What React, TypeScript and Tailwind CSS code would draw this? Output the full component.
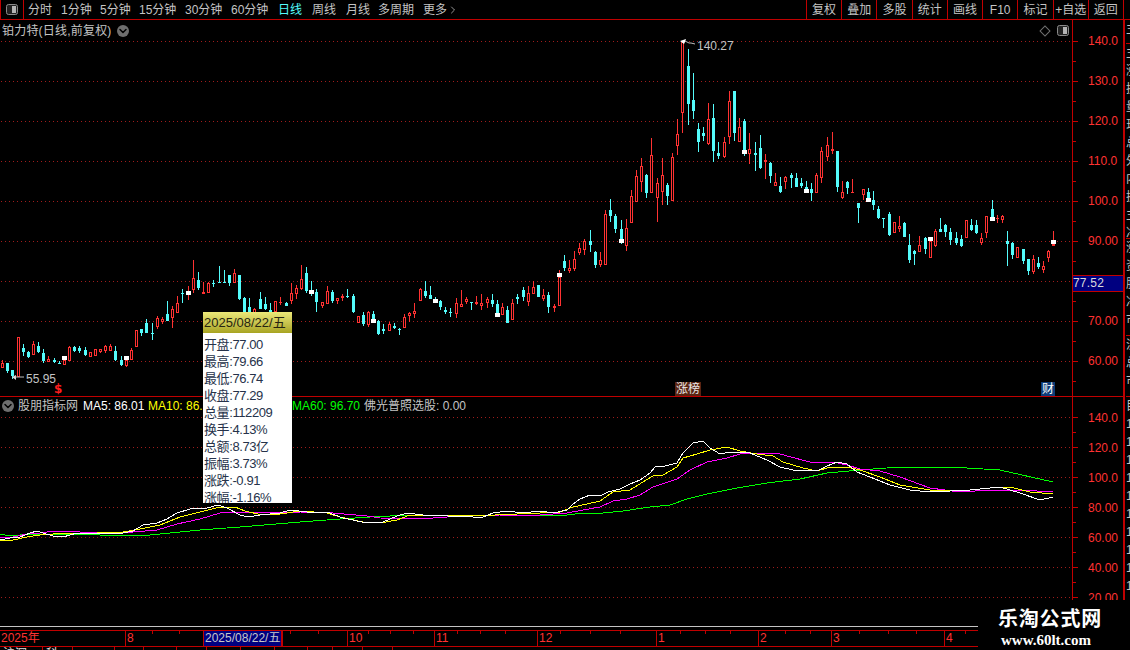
import { ChevronDown, ChevronRight } from "lucide-react";

type Kind = "r" | "c";
type Reading = [number, number, number, number, number, Kind, number?];

const RED = "#ff3232";
const CYAN = "#54fcfc";

// candle readings: x, high, body top, body bottom, low (measured at 3x), optional white block top
const CANDLE_GROUPS: { ox: number; oy: number; rows: Reading[] }[] = [
  {
    ox: 0,
    oy: 250,
    rows: [
      [7, 330, 340, 353, 355, "r"], [22, 340, 340, 362, 368, "c"], [37, 360, 360, 378, 388, "c"], [55, 262, 262, 382, 382, "r"],
      [70, 282, 293, 306, 318, "c"], [85, 303, 305, 320, 325, "c"], [100, 272, 282, 314, 316, "r"], [115, 276, 288, 305, 308, "c"],
      [130, 296, 310, 332, 338, "c"], [145, 318, 326, 335, 335, "r"], [163, 325, 330, 335, 338, "c"], [178, 333, 338, 343, 343, "c"],
      [193, 318, 330, 346, 346, "r", 318], [208, 288, 290, 332, 334, "r"], [223, 288, 290, 303, 305, "c"], [238, 288, 293, 303, 308, "c"],
      [256, 292, 300, 315, 318, "c"], [270, 306, 306, 322, 322, "r"], [286, 298, 298, 317, 317, "r"], [301, 297, 297, 305, 310, "r"],
      [316, 285, 288, 303, 308, "r"], [331, 283, 287, 303, 303, "r"], [346, 288, 302, 330, 333, "c"], [364, 318, 330, 345, 347, "c"],
      [379, 318, 330, 348, 350, "r", 318], [394, 295, 300, 329, 329, "r"], [409, 240, 240, 290, 290, "r"], [424, 236, 238, 250, 258, "c"],
      [439, 208, 220, 250, 250, "c"], [457, 220, 250, 252, 270, "c"], [472, 198, 204, 232, 236, "r"], [487, 200, 207, 216, 222, "r"],
      [502, 152, 192, 212, 212, "c"], [517, 168, 178, 205, 234, "r"], [532, 138, 160, 188, 188, "r"], [547, 118, 128, 130, 158, "c"],
      [565, 108, 123, 134, 150, "r", 123], [580, 30, 85, 120, 130, "r"], [595, 65, 90, 115, 120, "c"], [610, 96, 126, 131, 131, "r"],
      [625, 95, 98, 128, 128, "r"], [640, 90, 100, 103, 112, "c"], [658, 48, 96, 98, 100, "c"], [673, 60, 96, 98, 98, "c"],
      [688, 75, 75, 98, 108, "c"], [703, 58, 68, 100, 100, "r"], [718, 75, 75, 148, 150, "c"], [733, 142, 145, 185, 190, "c"],
      [748, 145, 172, 190, 190, "c"], [764, 175, 178, 190, 190, "r"], [780, 126, 148, 178, 178, "c"], [795, 140, 162, 178, 180, "c"],
      [811, 160, 180, 185, 190, "c"], [826, 152, 152, 185, 185, "r"], [841, 140, 155, 160, 165, "r"], [859, 155, 160, 168, 168, "c"],
    ],
  },
  {
    ox: 280,
    oy: 255,
    rows: [
      [34, 85, 115, 137, 147, "r"], [49, 90, 100, 117, 132, "r"], [64, 30, 72, 102, 105, "r"], [79, 37, 55, 108, 113, "c"],
      [94, 78, 105, 105, 122, "c", 105], [109, 102, 110, 140, 170, "c"], [127, 140, 142, 152, 158, "r"], [142, 93, 108, 146, 146, "r"],
      [157, 105, 110, 138, 145, "c"], [172, 130, 130, 137, 147, "r"], [187, 117, 123, 130, 137, "r"], [202, 102, 122, 124, 130, "c"],
      [220, 118, 123, 172, 174, "c"], [235, 182, 182, 204, 204, "r"], [250, 170, 180, 207, 213, "c"], [265, 168, 170, 210, 215, "r"],
      [280, 168, 178, 192, 192, "c", 192], [295, 195, 198, 236, 240, "c"], [310, 207, 222, 228, 237, "c"], [328, 200, 207, 228, 228, "r"],
      [343, 205, 212, 218, 222, "c"], [358, 218, 222, 224, 240, "c"], [373, 178, 186, 218, 218, "r"], [388, 170, 174, 184, 200, "r"],
      [403, 145, 168, 177, 190, "r"], [421, 100, 102, 137, 137, "r"], [436, 78, 108, 122, 128, "c"], [451, 93, 120, 132, 132, "c"],
      [466, 125, 132, 132, 144, "c", 132], [481, 135, 138, 156, 165, "c"], [496, 155, 165, 170, 177, "c"], [511, 158, 170, 172, 187, "c"],
      [529, 128, 145, 177, 190, "r"], [544, 105, 148, 155, 155, "r"], [559, 125, 132, 140, 147, "r"], [574, 142, 142, 144, 165, "c"],
      [589, 123, 142, 147, 150, "r"], [604, 117, 145, 152, 165, "r"], [622, 127, 132, 143, 160, "r"], [637, 117, 135, 148, 155, "c"],
      [652, 135, 148, 174, 174, "c", 174],
    ],
  },
  {
    ox: 500,
    oy: 140,
    rows: [
      [7, 490, 502, 525, 525, "r"], [22, 498, 510, 548, 548, "c"], [37, 477, 489, 540, 540, "r"], [52, 462, 472, 477, 491, "c"],
      [70, 441, 450, 471, 483, "c"], [85, 438, 460, 485, 498, "r"], [100, 424, 442, 461, 461, "r"], [115, 435, 435, 471, 471, "c"],
      [130, 447, 466, 476, 483, "r"], [145, 456, 465, 501, 518, "c"], [163, 492, 498, 503, 515, "r"], [178, 390, 411, 497, 497, "r", 399],
      [193, 345, 363, 385, 392, "c"], [208, 360, 385, 392, 398, "r"], [223, 333, 358, 388, 392, "r"], [238, 309, 324, 339, 346, "r"],
      [253, 297, 304, 329, 344, "r"], [271, 270, 303, 315, 335, "c"], [286, 333, 336, 375, 383, "c"], [301, 336, 361, 374, 381, "r"],
      [316, 210, 222, 374, 374, "r"], [331, 177, 210, 228, 245, "c"], [346, 222, 228, 266, 278, "c"], [364, 240, 267, 297, 312, "c", 297],
      [379, 237, 265, 319, 332, "r"],
    ],
  },
  {
    ox: 630,
    oy: 30,
    rows: [
      [3, 480, 498, 580, 580, "r"], [19, 420, 438, 515, 515, "r"], [34, 384, 408, 455, 485, "r"], [49, 432, 435, 488, 505, "c"],
      [64, 324, 376, 490, 490, "r"], [82, 445, 460, 503, 575, "r"], [97, 385, 436, 485, 525, "r"], [112, 460, 466, 497, 524, "c"],
      [127, 370, 382, 512, 512, "r"], [142, 267, 313, 347, 375, "r"], [157, 35, 35, 250, 308, "r"], [175, 57, 108, 222, 285, "c"],
      [190, 130, 210, 242, 267, "c"], [205, 280, 297, 335, 365, "c"], [220, 292, 308, 318, 332, "c"], [235, 220, 268, 342, 345, "r"],
      [250, 222, 265, 362, 395, "c"], [265, 337, 369, 378, 387, "c"], [283, 322, 337, 381, 383, "r"], [298, 184, 214, 320, 342, "r"],
      [313, 183, 183, 308, 332, "c"], [328, 265, 292, 335, 335, "r"], [343, 267, 273, 360, 378, "c", 360], [358, 310, 358, 372, 402, "r"],
      [376, 336, 370, 375, 423, "c"], [391, 315, 355, 413, 417, "c"], [406, 373, 390, 396, 447, "r"], [421, 396, 400, 437, 458, "c"],
      [436, 430, 457, 467, 467, "r"], [451, 441, 468, 485, 489, "c"], [466, 437, 442, 455, 477, "r"], [484, 430, 435, 444, 473, "c"],
      [499, 430, 444, 470, 470, "c"], [514, 445, 460, 467, 473, "c"], [529, 453, 472, 477, 477, "c", 477], [544, 460, 477, 489, 513, "c"],
      [559, 430, 435, 488, 488, "r"], [574, 352, 363, 443, 458, "r"], [592, 322, 346, 380, 392, "r"], [607, 307, 357, 362, 372, "r"],
      [622, 363, 363, 470, 486, "c"], [637, 453, 487, 503, 507, "r"], [652, 453, 457, 473, 492, "c"], [667, 447, 487, 490, 490, "r"],
      [685, 518, 518, 533, 578, "c"],
    ],
  },
  {
    ox: 860,
    oy: 180,
    rows: [
      [10, 27, 28, 45, 60, "r"], [25, 24, 36, 53, 53, "c", 53], [40, 33, 60, 75, 90, "c"], [55, 78, 87, 113, 117, "c"],
      [70, 115, 115, 117, 143, "c"], [88, 97, 102, 165, 167, "c"], [103, 125, 127, 158, 158, "r"], [118, 108, 138, 147, 155, "r"],
      [133, 125, 130, 170, 170, "c"], [148, 162, 195, 240, 248, "c"], [163, 210, 213, 222, 255, "c"], [178, 168, 195, 215, 215, "r"],
      [196, 172, 175, 207, 222, "c"], [211, 171, 183, 233, 233, "r", 171], [226, 148, 153, 198, 200, "r"], [241, 114, 147, 156, 156, "c"],
      [256, 132, 135, 157, 170, "c"], [271, 145, 157, 180, 195, "c"], [289, 156, 175, 190, 195, "c"], [304, 165, 178, 198, 200, "c"],
      [319, 121, 121, 173, 173, "r"], [334, 117, 136, 150, 153, "c"], [349, 120, 135, 160, 162, "c"], [364, 160, 175, 190, 195, "r"],
      [379, 108, 108, 160, 173, "r"], [397, 60, 87, 111, 111, "c", 111], [412, 105, 114, 118, 128, "r"], [427, 105, 108, 121, 130, "r"],
      [442, 153, 183, 192, 258, "c"], [457, 185, 188, 225, 237, "c"], [472, 202, 202, 233, 233, "r"], [490, 207, 207, 243, 252, "c"],
      [505, 237, 237, 273, 285, "c"], [520, 225, 238, 277, 282, "r"], [535, 231, 249, 262, 267, "c"], [550, 243, 258, 270, 278, "r"],
      [565, 210, 213, 233, 246, "r"], [580, 153, 192, 197, 197, "r", 180],
    ],
  },
];

const CANDLES = CANDLE_GROUPS.flatMap(({ ox, oy, rows }) =>
  rows.map(([x, hi, top, bot, lo, kind, white]) => ({
    x: Math.floor(ox + x / 3),
    hi: Math.round(oy + hi / 3),
    top: Math.round(oy + top / 3),
    bot: Math.round(oy + bot / 3),
    lo: Math.round(oy + lo / 3),
    kind,
    white: white === undefined ? null : Math.round(oy + white / 3),
  })),
);

const MA5 = "0,540 10,538 20,537 30,533 37,531 43,533 53,536 63,537 77,533 100,533 123,533 133,531 143,525 157,523 167,519 177,513 190,509 207,508 218,505 227,508 240,515 248,517 260,515 280,513 290,510 307,512 327,512 343,518 367,523 383,522 397,516 407,513 423,515 473,517 483,517 493,513 507,511 523,513 540,511 553,513 567,510 573,504 580,499 590,495 602,495 608,492 620,489 630,484 640,480 650,473 655,467 665,466 677,463 683,453 693,443 703,441 710,448 720,454 730,452 750,453 767,460 780,467 793,470 817,471 827,466 837,462 847,464 857,472 870,477 890,485 910,490 930,492 950,491 970,490 1000,487 1020,493 1040,500 1053,497";
const MA10 = "0,541 13,540 27,537 40,535 67,533 97,533 123,532 140,529 160,525 180,517 200,512 220,507 235,507 245,511 262,515 280,514 300,511 327,513 340,517 363,522 380,523 397,520 410,515 430,515 473,516 540,513 560,512 573,507 587,504 600,501 613,492 630,490 643,482 653,476 663,475 677,467 683,458 697,454 710,450 727,447 740,451 757,454 773,456 783,462 803,468 817,471 830,467 847,467 860,470 880,477 900,485 930,490 960,491 990,488 1010,487 1030,492 1053,494";
const MA20 = "0,538 13,537 27,534 40,533 47,532 60,531 100,533 133,532 157,530 177,524 200,519 220,513 240,512 267,512 300,512 333,513 367,516 380,518 420,519 460,516 500,515 540,515 567,513 583,510 600,507 613,501 627,499 640,495 653,487 677,479 690,470 707,462 727,458 740,454 757,453 777,453 787,456 810,462 833,462 847,465 860,469 880,471 900,477 930,488 960,492 990,490 1020,490 1053,492";
const MA60 = "0,534 10,536 30,534 70,534 100,535 150,535 170,533 200,530 240,527 300,522 340,519 370,517 390,516 473,515 523,515 540,516 567,515 583,513 603,513 623,511 650,507 670,505 687,499 707,494 737,488 767,483 800,479 827,473 860,470 900,467 950,467 1000,470 1053,482";

const MAIN_GRID = [41, 81, 121, 161, 201, 241, 281, 321, 361];
const SUB_GRID = [417, 447, 477, 507, 537, 567, 597];
const MAIN_AXIS = ["140.0", "130.0", "120.0", "110.0", "100.0", "90.00", "80.00", "70.00", "60.00"];
const SUB_AXIS = ["140.0", "120.0", "100.0", "80.00", "60.00", "40.00", "20.00"];

const PERIODS = [
  { label: "分时", width: "w-[33px]" },
  { label: "1分钟", width: "w-[39px]" },
  { label: "5分钟", width: "w-[39px]" },
  { label: "15分钟", width: "w-[46px]" },
  { label: "30分钟", width: "w-[46px]" },
  { label: "60分钟", width: "w-[47px]" },
  { label: "日线", width: "w-[34px]", active: true },
  { label: "周线", width: "w-[34px]" },
  { label: "月线", width: "w-[32px]" },
  { label: "多周期", width: "w-[44px]" },
];
const ACTIONS = ["复权", "叠加", "多股", "统计", "画线", "F10", "标记", "+自选", "返回"];

const QUOTE_ROWS = [
  "开盘:77.00", "最高:79.66", "最低:76.74", "收盘:77.29", "总量:112209",
  "换手:4.13%", "总额:8.73亿", "振幅:3.73%", "涨跌:-0.91", "涨幅:-1.16%",
];

const TIME_SEGMENTS = [
  { label: "2025年", width: "w-[125px]" },
  { label: "8", width: "w-[78px]" },
  { label: "2025/08/22/五", width: "w-[79px]", active: true },
  { label: "", width: "w-[65px]" },
  { label: "10", width: "w-[87px]" },
  { label: "11", width: "w-[103px]" },
  { label: "12", width: "w-[119px]" },
  { label: "1", width: "w-[102px]" },
  { label: "2", width: "w-[73px]" },
  { label: "3", width: "w-[113px]" },
  { label: "4", width: "w-[34px]" },
];
const TIME_TICKS = [152, 179, 290, 318, 368, 390, 413, 457, 480, 505, 560, 590, 620, 680, 705, 730, 785, 810, 859, 888, 916, 965];

const SIDE_SECTIONS = [
  { height: "h-[24px]", rows: ["主"] },
  { height: "h-[195px]", rows: ["主", "涨", "换", "量", "现", "总", "外", "内", "换", "主", "净"] },
  { height: "h-[97px]", rows: ["涨", "资", "股", "净", "市"] },
  { height: "h-[61px]", rows: ["流", "总", "市"] },
  { height: "flex-1", rows: ["目", "1", "1", "1", "1", "1", "1", "1", "1", "1", "1"] },
];

const BOTTOM_TABS = [
  { label: "沪深", width: "w-[43px]" },
  { label: "科", width: "w-[30px]" },
  { label: "", width: "w-[42px]" },
  { label: "", width: "w-[29px]" },
  { label: "", width: "w-[33px]" },
  { label: "", width: "w-[30px]" },
  { label: "", width: "w-[34px]" },
  { label: "", width: "w-[34px]" },
  { label: "", width: "w-[33px]" },
  { label: "", width: "w-[25px]" },
  { label: "", width: "w-[30px]" },
  { label: "", width: "w-[30px]" },
];

function Candle({ x, hi, top, bot, lo, kind, white }: (typeof CANDLES)[number]) {
  const color = kind === "r" ? RED : CYAN;
  const height = Math.max(bot - top, 1);
  return (
    <g>
      <rect x={x} y={hi} width={1} height={Math.max(lo - hi, 1)} fill={color} />
      <rect x={x - 1} y={top} width={3} height={height} fill={color} />
      {kind === "r" && height > 2 ? <rect x={x} y={top + 1} width={1} height={height - 2} fill="#000" /> : null}
      {white !== null ? <rect x={x - 2} y={white} width={5} height={4} fill="#fff" /> : null}
    </g>
  );
}

function DotGrid({ rows }: { rows: number[] }) {
  return (
    <>
      {rows.map((y) => (
        <line key={y} x1={1} x2={1072} y1={y + 0.5} y2={y + 0.5} stroke="#a01c1c" strokeDasharray="1 3" />
      ))}
    </>
  );
}

function RoundChevron({ className }: { className: string }) {
  return (
    <span className={`flex h-3 w-3 items-center justify-center rounded-full bg-[#6e6e6e] ${className}`}>
      <ChevronDown className="h-3 w-3 text-black" strokeWidth={3} />
    </span>
  );
}

function PanelIcon({ className }: { className: string }) {
  return (
    <svg className={className} width="12" height="11" viewBox="0 0 12 11">
      <rect x="0.5" y="0.5" width="11" height="10" rx="2" fill="#222" stroke="#8a8a8a" />
      <rect x="6" y="2" width="4" height="7" fill="#b4b4b4" />
    </svg>
  );
}

function AxisRows({ labels, rowHeight }: { labels: string[]; rowHeight: string }) {
  return (
    <>
      {labels.map((label, index) => (
        <div key={label + index}>
          <div className={`flex items-center ${rowHeight}`}>
            <span className="h-px w-[5px] bg-[#c80000]" />
            <span className="ml-[10px] text-[12px] leading-none text-[#ff3232]">{label}</span>
          </div>
          <div className={`flex items-center ${rowHeight}`}>
            <span className="h-px w-[3px] bg-[#c80000]" />
          </div>
        </div>
      ))}
    </>
  );
}

export default function App() {
  return (
    <div className="relative flex h-[650px] w-[1130px] flex-col overflow-hidden bg-black font-['Liberation_Sans','Noto_Sans_CJK_SC',sans-serif] text-[12px] text-[#c4c4c4]">
      {/* toolbar */}
      <header className="flex h-5 shrink-0 items-stretch border-b border-[#c00000]">
        <div className="flex w-6 items-center justify-center border-x border-[#c00000]">
          <PanelIcon className="mr-px" />
        </div>
        <nav className="ml-1 flex flex-1 items-center">
          {PERIODS.map(({ label, width, active }) => (
            <span key={label} className={`${width} ${active ? "text-[#54fcfc]" : ""}`}>
              {label}
            </span>
          ))}
          <span className="ml-px flex items-center">
            更多
            <ChevronRight className="h-3 w-3" strokeWidth={1.5} />
          </span>
        </nav>
        <div className="flex w-[317px] shrink-0">
          {ACTIONS.map((action) => (
            <span key={action} className="flex flex-1 items-center justify-center whitespace-nowrap border-l border-[#c00000]">
              {action}
            </span>
          ))}
        </div>
        <div className="w-[7px] border-l border-[#c00000]" />
      </header>

      <div className="flex min-h-0 flex-1">
        <div className="flex w-[1123px] shrink-0 flex-col">
          {/* price + indicator panels */}
          <div className="flex h-[580px] shrink-0">
            <div className="flex w-[1072px] shrink-0 flex-col">
              <section className="relative h-[376px] shrink-0">
                <svg className="block" width="1072" height="376" viewBox="0 20 1072 376" shapeRendering="crispEdges">
                  <DotGrid rows={MAIN_GRID} />
                  {CANDLES.map((candle) => (
                    <Candle key={candle.x} {...candle} />
                  ))}
                  <g shapeRendering="auto">
                    <polygon points="680,41 686,39 685,42 684,44" fill="#fff" />
                    <polyline points="685,41 689,43 691,43 695,44" fill="none" stroke="#bdbdbd" />
                    <text x="697" y="50" fontSize="12" fill="#c4c4c4">140.27</text>
                    <polygon points="12,377 16,375 16,380" fill="#dcdcdc" />
                    <polyline points="15,377 24,377" fill="none" stroke="#bdbdbd" />
                    <text x="26" y="383" fontSize="12" fill="#c4c4c4">55.95</text>
                  </g>
                </svg>
                <div className="absolute left-[2px] top-[2px] flex items-center tracking-[0.2px]">
                  <span>铂力特(日线,前复权)</span>
                  <RoundChevron className="ml-[5px]" />
                </div>
                <div className="absolute right-[3px] top-[5px] flex items-center gap-[8px]">
                  <span className="h-[8px] w-[8px] rotate-45 border border-[#707070]" />
                  <PanelIcon className="" />
                </div>
                <span className="absolute left-[54px] top-[362px] font-['DejaVu_Sans',sans-serif] text-[12px] font-bold leading-[14px] text-[#ff1e1e]">$</span>
                <span className="absolute left-[675px] top-[362px] bg-[#5a2412] px-px text-[12px] leading-[14px] text-[#e8e8e8]">涨榜</span>
                <span className="absolute left-[1041px] top-[362px] bg-[#0c3c78] px-px text-[12px] leading-[14px] text-white">财</span>
              </section>

              <section className="relative flex-1 border-t border-[#c00000]">
                <svg className="block" width="1072" height="203" viewBox="0 397 1072 203" shapeRendering="crispEdges">
                  <DotGrid rows={SUB_GRID} />
                  <g fill="none" strokeWidth="1">
                    <polyline points={MA60} stroke="#00ff00" />
                    <polyline points={MA20} stroke="#ff00ff" />
                    <polyline points={MA10} stroke="#ffff00" />
                    <polyline points={MA5} stroke="#ffffff" />
                  </g>
                </svg>
                <div className="absolute left-[2px] top-0 flex items-center whitespace-nowrap">
                  <RoundChevron className="" />
                  <span className="ml-[4px] w-[65px]">股朋指标网</span>
                  <span className="w-[65px] text-white">MA5: 86.01</span>
                  <span className="w-[144px] text-[#ffff00]">MA10: 86.13</span>
                  <span className="w-[72px] text-[#00ff00]">MA60: 96.70</span>
                  <span>佛光普照选股: 0.00</span>
                </div>
              </section>
            </div>

            {/* right axis */}
            <aside className="relative flex w-[51px] shrink-0 flex-col border-l border-[#c00000]">
              <div className="h-[376px] shrink-0 overflow-hidden pt-[11px]">
                <AxisRows labels={MAIN_AXIS} rowHeight="h-5" />
              </div>
              <div className="flex-1 overflow-hidden border-t border-[#c00000] pt-[13px]">
                <AxisRows labels={SUB_AXIS} rowHeight="h-[15px]" />
              </div>
              <span className="absolute left-0 top-[255px] h-[17px] w-[50px] border-y border-[#c00000] bg-[#000080] text-[12px] leading-[15px] tracking-[0.2px] text-[#dcdcdc]">
                77.52
              </span>
            </aside>
          </div>

          {/* time axis */}
          <div className="mt-[26px] h-[4px] shrink-0 border-t border-[#c4c4c4]" />
          <div className="relative flex h-[17px] w-[978px] shrink-0 border-y border-[#c00000] text-[12px] leading-[15px] text-[#ff3232]">
            {TIME_SEGMENTS.map(({ label, width, active }, index) => (
              <span
                key={index}
                className={`${width} shrink-0 whitespace-nowrap pl-px ${index > 0 ? "border-l border-[#c00000]" : ""} ${active ? "border-r bg-[#000080] text-[#c8c8c8]" : ""}`}
              >
                {label}
              </span>
            ))}
            <svg className="absolute left-0 top-0" width="978" height="3" shapeRendering="crispEdges">
              {TIME_TICKS.map((x) => (
                <rect key={x} x={x} y={0} width={1} height={3} fill="#c00000" />
              ))}
            </svg>
          </div>
          <div className="flex h-[3px] shrink-0 overflow-hidden">
            {BOTTOM_TABS.map(({ label, width }, index) => (
              <span key={index} className={`${width} whitespace-nowrap border-r border-[#c00000] pl-[3px] leading-[14px] text-[#e0e0e0]`}>
                {label}
              </span>
            ))}
          </div>
        </div>

        {/* clipped side list */}
        <aside className="flex min-w-0 flex-1 flex-col overflow-hidden border-l-2 border-[#c00000] pl-[1px]">
          {SIDE_SECTIONS.map(({ height, rows }, index) => (
            <div key={index} className={`${height} overflow-hidden border-b border-[#c00000] leading-[18px]`}>
              {rows.map((row, rowIndex) => (
                <div key={rowIndex}>{row}</div>
              ))}
            </div>
          ))}
        </aside>
      </div>

      {/* tooltip */}
      <div className="absolute left-[203px] top-[312px] h-[191px] w-[89px] overflow-hidden bg-white text-[13px] leading-[17px] text-[#26324a]">
        <div className="flex h-[21px] items-center whitespace-nowrap bg-gradient-to-b from-[#ece878] to-[#a8a420] pl-px text-[#262410]">
          2025/08/22/五
        </div>
        <div className="pt-[3px] tracking-[-0.4px]">
          {QUOTE_ROWS.map((row) => (
            <div key={row} className="whitespace-nowrap pl-px">{row}</div>
          ))}
        </div>
      </div>

      {/* watermark */}
      <div className="absolute left-[978px] top-[600px] flex h-[50px] w-[152px] flex-col items-start bg-black pl-[20px] pt-[7px] font-['Liberation_Serif','Noto_Sans_CJK_SC',serif] font-bold text-white">
        <span className="text-[20px] leading-[24px] tracking-[0.8px]">乐淘公式网</span>
        <span className="ml-[3px] text-[15px] leading-[18px]">www.60lt.com</span>
      </div>
    </div>
  );
}
